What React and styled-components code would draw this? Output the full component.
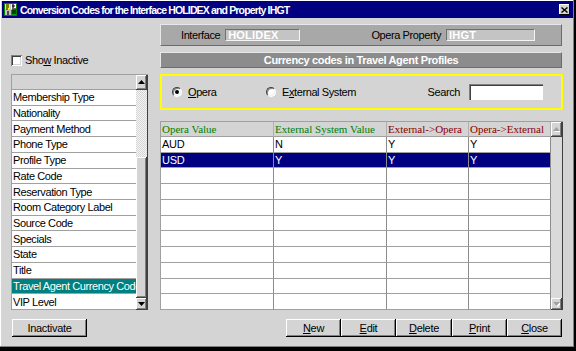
import React from 'react';
import styled, { createGlobalStyle } from 'styled-components';

const GlobalStyle = createGlobalStyle`
  html, body { margin: 0; padding: 0; background: #000; }
  body { font-family: "Liberation Sans", Arial, sans-serif; font-size: 11px; }
  * { box-sizing: border-box; }
`;

const GRAY = '#d4d4d4';

const Window = styled.div`
  width: 576px;
  height: 351px;
  background: ${GRAY};
  padding: 1px 3px 4px 2px;
  box-shadow: inset -2px -4px 0 #000, inset -3px -5px 0 #808080, inset 1px 1px 0 #fff;
  display: flex;
  flex-direction: column;
`;

const TitleBar = styled.div`
  height: 17px;
  flex: none;
  background: #000080;
  color: #fff;
  font-weight: bold;
  font-size: 10.5px;
  letter-spacing: -0.85px;
  display: flex;
  align-items: center;
  padding-left: 2px;
`;

const TitleText = styled.span`
  margin-left: 3px;
  white-space: nowrap;
`;

const CloseBox = styled.div`
  margin-left: auto;
  margin-right: 3px;
  width: 11px;
  height: 11px;
  background: ${GRAY};
  box-shadow: inset -1px -1px #000, inset 1px 1px #fff;
  display: flex;
  align-items: center;
  justify-content: center;
`;

const Content = styled.div`
  display: grid;
  grid-template-columns: 137px 403px;
  grid-template-rows: 22px 6px 16px 6px 36px 11px 189px 9px 18px;
  grid-template-areas:
    ". header"
    ". ."
    "show title"
    ". ."
    "list filter"
    "list ."
    "list table"
    ". ."
    "inact actions";
  column-gap: 12px;
  padding: 6px 0 0 9px;
`;

const InfoBar = styled.div`
  grid-area: header;
  width: 402px;
  background: #a8a8a8;
  border: 1px solid;
  border-color: #e8e8e8 #6c6c6c #6c6c6c #e8e8e8;
  display: flex;
  align-items: center;
  padding: 0 26px 0 20px;
`;

const InfoGroup = styled.div`
  display: flex;
  align-items: center;
  gap: 5px;
  margin-left: ${p => (p.$push ? 'auto' : '0')};
`;

const Label = styled.span`
  color: #000;
  letter-spacing: -0.4px;
  white-space: nowrap;
`;

const ReadField = styled.div`
  width: ${p => p.$w}px;
  height: 12px;
  background: #c4c4c4;
  color: #fff;
  font-weight: bold;
  font-size: 11px;
  line-height: 11px;
  letter-spacing: 0.2px;
  padding-left: 2px;
  border: 1px solid;
  border-color: #707070 #f4f4f4 #f4f4f4 #707070;
`;

const SectionTitle = styled.div`
  grid-area: title;
  width: 402px;
  background: #8c8c8c;
  color: #fff;
  font-weight: bold;
  letter-spacing: -0.35px;
  text-align: center;
  line-height: 14px;
  border: 1px solid;
  border-color: #e8e8e8 #6c6c6c #6c6c6c #e8e8e8;
`;

const ShowRow = styled.label`
  grid-area: show;
  display: flex;
  align-items: center;
  gap: 3px;
  letter-spacing: -0.4px;
`;

const CheckBox = styled.span`
  width: 11px;
  height: 11px;
  background: #fff;
  box-shadow: inset 1px 1px #808080, inset -1px -1px #fff, inset 2px 2px #404040, inset -2px -2px ${GRAY};
`;

const U = styled.span`
  text-decoration: underline;
`;

const ListBox = styled.div`
  grid-area: list;
  display: flex;
  border-top: 1px solid #a0a0a0;
  border-left: 1px solid #a0a0a0;
`;

const ListColumn = styled.div`
  flex: 1;
  min-width: 0;
  display: grid;
  grid-template-rows: 15px repeat(14, 1fr);
`;

const ListHeader = styled.div`
  background: ${GRAY};
  border-bottom: 1px solid #a0a0a0;
`;

const ListRow = styled.div`
  background: ${p => (p.$selected ? '#008080' : '#fff')};
  color: ${p => (p.$selected ? '#fff' : '#000')};
  border-bottom: 1px solid #a0a0a0;
  padding-left: 1px;
  letter-spacing: -0.4px;
  white-space: nowrap;
  overflow: hidden;
  display: flex;
  align-items: center;
`;

const Scrollbar = styled.div`
  width: 12px;
  flex: none;
  display: flex;
  flex-direction: column;
  border-right: 1px solid #404040;
  background: #dadada;
`;

const ScrollButton = styled.div`
  height: ${p => p.$h}px;
  flex: none;
  background: ${GRAY};
  box-shadow: inset -1px -1px #404040, inset 1px 1px #fff, inset -2px -2px #808080;
  display: flex;
  align-items: center;
  justify-content: center;
`;

const Track = styled.div`
  flex: ${p => p.$grow};
  background: ${p => (p.$dither ? `repeating-conic-gradient(#f6f6f6 0 25%, ${GRAY} 0 50%) 0 0 / 2px 2px` : '#dadada')};
`;

const Thumb = styled.div`
  height: ${p => p.$h}px;
  flex: none;
  background: ${GRAY};
  box-shadow: inset -1px -1px #404040, inset 1px 1px #fff, inset -2px -2px #808080;
`;

const FilterBox = styled.div`
  grid-area: filter;
  border: 2px solid #ffff00;
  display: flex;
  align-items: center;
  padding: 0 18px 0 10px;
  letter-spacing: -0.4px;
`;

const RadioOption = styled.label`
  width: ${p => (p.$w ? `${p.$w}px` : 'auto')};
  display: flex;
  align-items: center;
  gap: 6px;
  white-space: nowrap;
`;

const RadioDot = styled.span`
  width: 10px;
  height: 10px;
  border-radius: 50%;
  background: #fff;
  box-shadow: inset 1px 1px #808080, inset -1px -1px #f0f0f0;
  border: 1px solid;
  border-color: #404040 #fff #fff #404040;
  display: flex;
  align-items: center;
  justify-content: center;
  &::after {
    content: '';
    width: 4px;
    height: 4px;
    border-radius: 50%;
    background: ${p => (p.$checked ? '#000' : 'transparent')};
  }
`;

const SearchGroup = styled.div`
  margin-left: auto;
  display: flex;
  align-items: center;
  gap: 9px;
`;

const SearchInput = styled.div`
  width: 74px;
  height: 16px;
  background: #fff;
  box-shadow: inset 1px 1px #808080, inset 2px 2px #404040, inset -1px -1px #fff;
`;

const TableBox = styled.div`
  grid-area: table;
  display: flex;
  border-top: 1px solid #a0a0a0;
  border-left: 1px solid #a0a0a0;
`;

const Grid = styled.div`
  flex: 1;
  display: grid;
  grid-template-columns: 113px 113px 82px 82px;
  grid-template-rows: 15px repeat(11, 1fr);
`;

const HeadCell = styled.div`
  background: ${GRAY};
  color: ${p => p.$color};
  font-family: "Liberation Serif", "Times New Roman", serif;
  font-size: 11px;
  padding-left: 1px;
  border-right: 1px solid #b0b0b0;
  border-bottom: 1px solid #a0a0a0;
  white-space: nowrap;
  overflow: hidden;
  display: flex;
  align-items: center;
`;

const Cell = styled.div`
  background: ${p => (p.$selected ? '#000080' : '#fff')};
  color: ${p => (p.$selected ? '#fff' : '#000')};
  border-right: 1px solid #8c8c8c;
  border-bottom: 1px solid #a0a0a0;
  padding-left: 1px;
  letter-spacing: -0.3px;
  white-space: nowrap;
  overflow: hidden;
  display: flex;
  align-items: center;
`;

const ButtonRow = styled.div`
  grid-area: ${p => p.$area};
  display: flex;
  justify-content: ${p => (p.$end ? 'flex-end' : 'flex-start')};
  padding: ${p => (p.$end ? '0 1px 0 0' : '0 0 0 1px')};
`;

const Button = styled.button`
  width: ${p => p.$w}px;
  height: 18px;
  padding: 0;
  border: none;
  background: ${GRAY};
  font-family: "Liberation Sans", Arial, sans-serif;
  font-size: 11px;
  font-weight: normal;
  letter-spacing: -0.3px;
  color: #000;
  box-shadow: inset -1px -1px #000, inset 1px 1px #fff, inset -2px -2px #808080;
`;

const Arrow = ({ dir = 'up', color = '#000', shadow }) => (
  <svg width="7" height="5" viewBox="0 0 7 5">
    {shadow && (
      <polygon
        points={dir === 'up' ? '4.5,1 8,5 1,5' : '1,1 8,1 4.5,5'}
        fill={shadow}
      />
    )}
    <polygon points={dir === 'up' ? '3.5,0 7,4 0,4' : '0,0 7,0 3.5,4'} fill={color} />
  </svg>
);

const AppIcon = () => (
  <svg width="13" height="13" viewBox="0 0 13 13">
    <rect x="0" y="0" width="13" height="13" fill="#c0c0c0" />
    <rect x="0" y="0" width="6" height="6" fill="#ffff00" />
    <rect x="7" y="7" width="6" height="6" fill="#00a000" />
    <rect x="7" y="0" width="6" height="6" fill="#ffffff" />
    <path d="M2 2 L5 2 M2 4 L5 4 M2 6 L4 6 M8 3 L11 3 M9 1 L9 11 M11 5 L11 11 M4 8 L4 12" stroke="#000" strokeWidth="1.2" />
    <rect x="0.5" y="0.5" width="12" height="12" fill="none" stroke="#008000" />
  </svg>
);

const listItems = [
  'Membership Type', 'Nationality', 'Payment Method', 'Phone Type', 'Profile Type',
  'Rate Code', 'Reservation Type', 'Room Category Label', 'Source Code', 'Specials',
  'State', 'Title', 'Travel Agent Currency Code', 'VIP Level',
];

const headers = [
  { t: 'Opera Value', c: '#008000' },
  { t: 'External System Value', c: '#008000' },
  { t: 'External->Opera', c: '#8b0000' },
  { t: 'Opera->External', c: '#8b0000' },
];

const rows = [
  ['AUD', 'N', 'Y', 'Y'],
  ['USD', 'Y', 'Y', 'Y'],
  ...Array.from({ length: 9 }, () => ['', '', '', '']),
];

const actions = [
  ['N', 'ew', 55], ['E', 'dit', 55], ['D', 'elete', 56], ['P', 'rint', 55], ['C', 'lose', 55],
];

export default function App() {
  return (
    <>
      <GlobalStyle />
      <Window>
        <TitleBar>
          <AppIcon />
          <TitleText>Conversion Codes for the Interface HOLIDEX and Property IHGT</TitleText>
          <CloseBox>
            <svg width="7" height="6" viewBox="0 0 7 6">
              <path d="M0.5 0.5 L6.5 5.5 M6.5 0.5 L0.5 5.5" stroke="#000" strokeWidth="1.4" />
            </svg>
          </CloseBox>
        </TitleBar>
        <Content>
          <InfoBar>
            <InfoGroup>
              <Label>Interface</Label>
              <ReadField $w={75}>HOLIDEX</ReadField>
            </InfoGroup>
            <InfoGroup $push>
              <Label>Opera Property</Label>
              <ReadField $w={89}>IHGT</ReadField>
            </InfoGroup>
          </InfoBar>

          <ShowRow>
            <CheckBox />
            <span>Sho<U>w</U> Inactive</span>
          </ShowRow>

          <SectionTitle>Currency codes in Travel Agent Profiles</SectionTitle>

          <ListBox>
            <ListColumn>
              <ListHeader />
              {listItems.map(item => (
                <ListRow key={item} $selected={item === 'Travel Agent Currency Code'}>
                  {item}
                </ListRow>
              ))}
            </ListColumn>
            <Scrollbar>
              <ScrollButton $h={15}><Arrow dir="up" /></ScrollButton>
              <Track $grow={1} $dither />
              <Thumb $h={141} />
              <ScrollButton $h={12}><Arrow dir="down" /></ScrollButton>
            </Scrollbar>
          </ListBox>

          <FilterBox>
            <RadioOption $w={94}>
              <RadioDot $checked />
              <span><U>O</U>pera</span>
            </RadioOption>
            <RadioOption>
              <RadioDot />
              <span>E<U>x</U>ternal System</span>
            </RadioOption>
            <SearchGroup>
              <Label>Search</Label>
              <SearchInput />
            </SearchGroup>
          </FilterBox>

          <TableBox>
            <Grid>
              {headers.map(h => (
                <HeadCell key={h.t} $color={h.c}>{h.t}</HeadCell>
              ))}
              {rows.map((r, i) =>
                r.map((v, j) => (
                  <Cell key={`${i}-${j}`} $selected={i === 1}>{v}</Cell>
                ))
              )}
            </Grid>
            <Scrollbar>
              <ScrollButton $h={15}><Arrow dir="up" color="#a0a0a0" shadow="#fff" /></ScrollButton>
              <Track $grow={1} />
              <ScrollButton $h={12}><Arrow dir="down" color="#a0a0a0" shadow="#fff" /></ScrollButton>
            </Scrollbar>
          </TableBox>

          <ButtonRow $area="inact">
            <Button $w={75}>Inactivate</Button>
          </ButtonRow>

          <ButtonRow $area="actions" $end>
            {actions.map(([k, rest, w]) => (
              <Button key={k} $w={w}><U>{k}</U>{rest}</Button>
            ))}
          </ButtonRow>
        </Content>
      </Window>
    </>
  );
}
